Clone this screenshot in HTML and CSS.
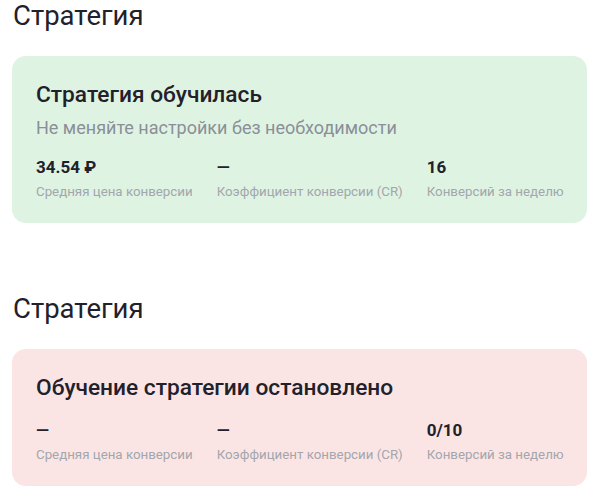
FILE: index.html
```html
<!DOCTYPE html>
<html lang="ru">
<head>
<meta charset="utf-8">
<title>Стратегия</title>
<link rel="stylesheet" href="styles.css">
</head>
<body>

<div class="section">
  <h2 class="section-title">Стратегия</h2>
  <div class="card card-ok">
    <div class="card-title">Стратегия обучилась</div>
    <div class="card-hint">Не меняйте настройки без необходимости</div>
    <div class="stats">
      <div class="stat">
        <div class="stat-value">34.54 ₽</div>
        <div class="stat-label">Средняя цена конверсии</div>
      </div>
      <div class="stat">
        <div class="stat-value">—</div>
        <div class="stat-label">Коэффициент конверсии (CR)</div>
      </div>
      <div class="stat">
        <div class="stat-value">16</div>
        <div class="stat-label">Конверсий за неделю</div>
      </div>
    </div>
  </div>
</div>

<div class="section">
  <h2 class="section-title">Стратегия</h2>
  <div class="card card-stop">
    <div class="card-title">Обучение стратегии остановлено</div>
    <div class="stats">
      <div class="stat">
        <div class="stat-value">—</div>
        <div class="stat-label">Средняя цена конверсии</div>
      </div>
      <div class="stat">
        <div class="stat-value">—</div>
        <div class="stat-label">Коэффициент конверсии (CR)</div>
      </div>
      <div class="stat">
        <div class="stat-value">0/10</div>
        <div class="stat-label">Конверсий за неделю</div>
      </div>
    </div>
  </div>
</div>

</body>
</html>
```
FILE: styles.css
```css
body{margin:0; padding:0 14px 0 12px; font-family:Roboto, "Noto Sans", sans-serif; color:#21212b; background:#fff;}

.section{margin-bottom:70px;}

.section:last-child{margin-bottom:0;}

.section-title{margin:0; padding-left:1px; font-size:27.5px; font-weight:400; line-height:32px;}

.card{margin-top:24px; padding:24px 24px 21px 24px; border-radius:14px;}

.card-ok{background:#dff3e2;}

.card-stop{background:#fbe5e4;}

.card-title{font-size:22.7px; line-height:30px; font-weight:500;}

.card-hint{margin-top:6px; font-size:18px; line-height:24px; color:#8a8f99;}

.stats{display:flex; gap:24px; margin-top:16px;}

.stat{flex:none;}

.stat-value{font-size:17px; line-height:22px; font-weight:700;}

.stat-label{margin-top:4px; font-size:13.3px; line-height:20px; color:#a2a6ad; white-space:nowrap;}
```
